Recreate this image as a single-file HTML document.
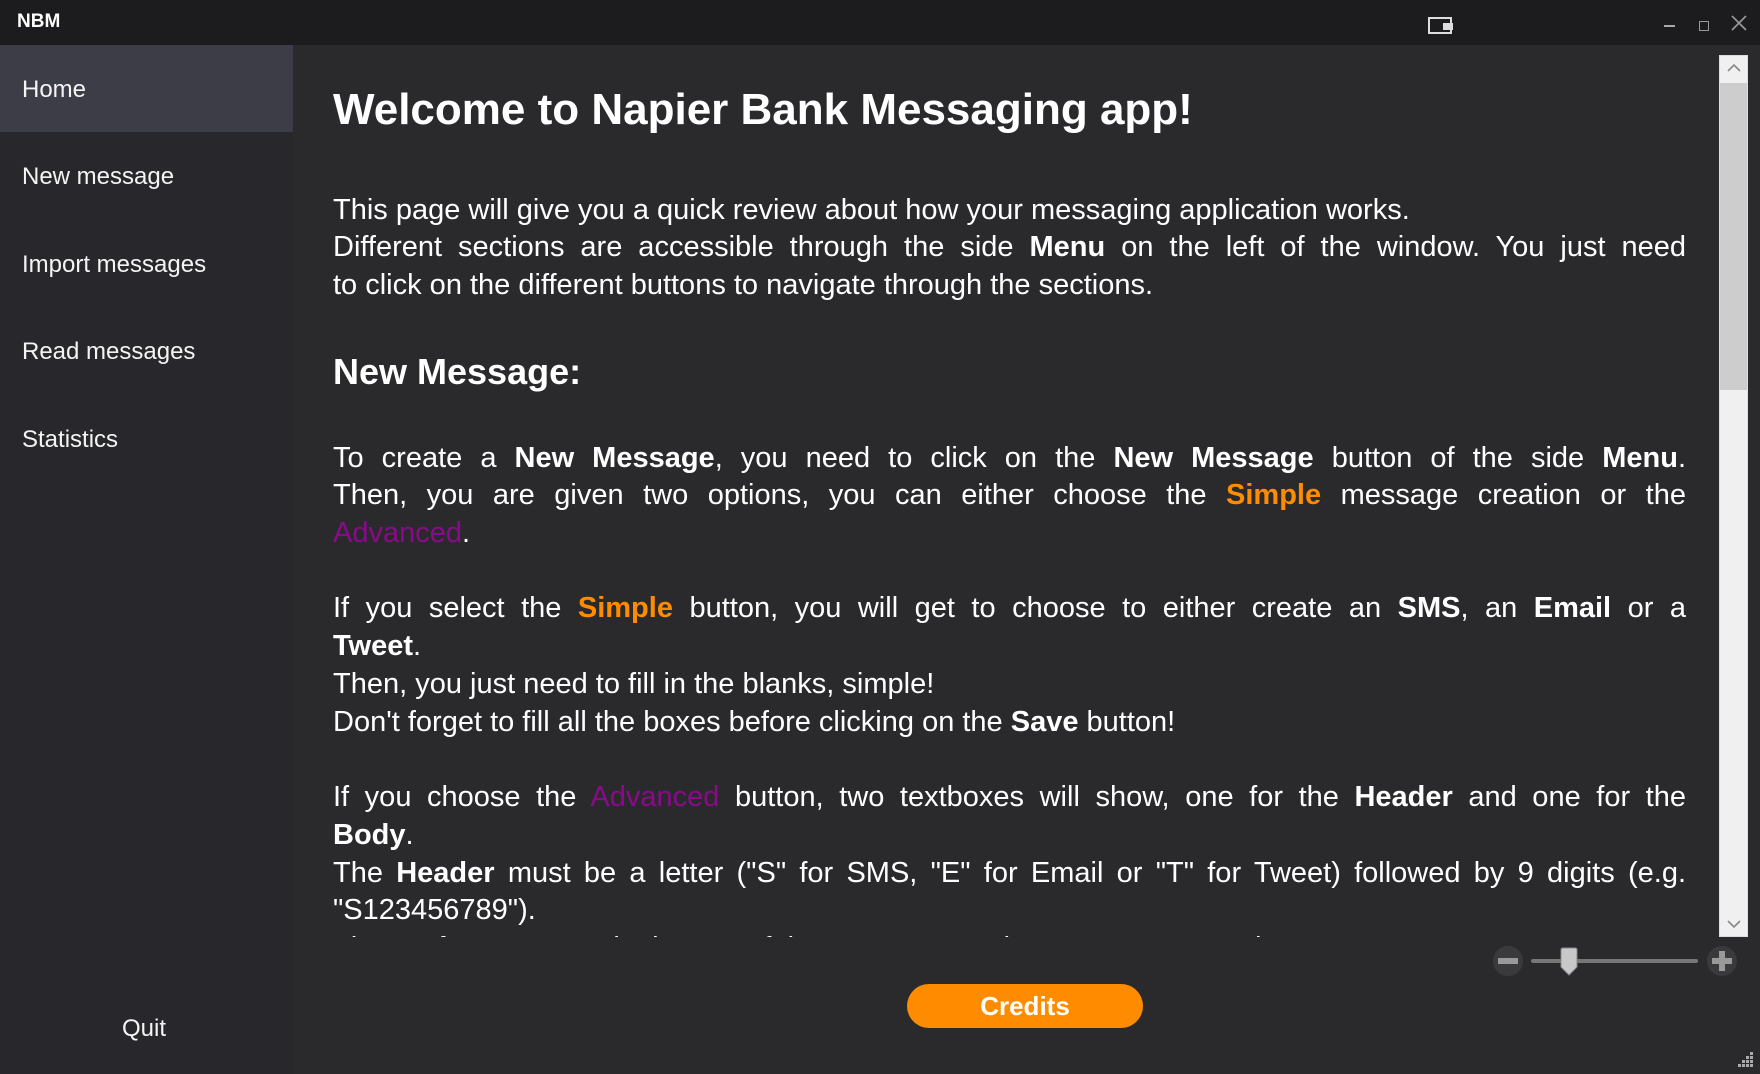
<!DOCTYPE html>
<html><head><meta charset="utf-8"><style>
*{margin:0;padding:0;box-sizing:border-box}
body{width:1760px;height:1074px;background:#2a2a2d;font-family:"Liberation Sans",sans-serif;color:#fff;position:relative;overflow:hidden}
.tb{position:absolute;left:0;top:0;width:1760px;height:45px;background:#1c1c1e}
.side{position:absolute;left:0;top:45px;width:293px;height:1029px;background:#28282c}
.nav{position:absolute;left:22px;font-size:24px;line-height:30px;color:#f4f4f4}
.c{position:absolute;left:333px;width:1353px;white-space:nowrap;font-size:29px;line-height:38px;color:#fff}
.j{text-align:justify;text-align-last:justify}
b{font-weight:bold}
.o{color:#ff8c00}
.p{color:#8b0a8b}
</style></head><body>
<div class="tb">
<div style="position:absolute;left:17px;top:11px;font-size:19px;font-weight:bold">NBM</div>
<div style="position:absolute;left:1428px;top:17px;width:24px;height:17px;border:2px solid #ddd"></div>
<div style="position:absolute;left:1443px;top:23px;width:10px;height:7px;background:#ddd"></div>
<div style="position:absolute;left:1664px;top:25px;width:11px;height:2px;background:#aaa"></div>
<div style="position:absolute;left:1699px;top:21px;width:10px;height:10px;border:1.5px solid #999"></div>
<svg style="position:absolute;left:1731px;top:15px" width="16" height="16"><path d="M1 1L15 15M15 1L1 15" stroke="#999" stroke-width="1.6"/></svg>
</div>
<div class="side">
<div style="position:absolute;left:0;top:0;width:293px;height:87px;background:#3d3d47"></div>
</div>
<div class="nav" style="top:75px">Home</div>
<div class="nav" style="top:162px">New message</div>
<div class="nav" style="top:250px">Import messages</div>
<div class="nav" style="top:337px">Read messages</div>
<div class="nav" style="top:425px">Statistics</div>
<div class="nav" style="top:1014px;left:122px">Quit</div>

<div style="position:absolute;left:293px;top:45px;width:1425px;height:892px;overflow:hidden">
<div style="position:relative;left:-293px;top:-45px">
<div class="c" style="top:82px;font-size:44px;line-height:56px;font-weight:bold">Welcome to Napier Bank Messaging app!</div>
<div class="c" style="top:191px">This page will give you a quick review about how your messaging application works.</div>
<div class="c j" style="top:228px">Different sections are accessible through the side <b>Menu</b> on the left of the window. You just need</div>
<div class="c" style="top:266px">to click on the different buttons to navigate through the sections.</div>
<div class="c" style="top:350px;font-size:36px;line-height:44px;font-weight:bold">New Message:</div>
<div class="c j" style="top:439px">To create a <b>New Message</b>, you need to click on the <b>New Message</b> button of the side <b>Menu</b>.</div>
<div class="c j" style="top:476px">Then, you are given two options, you can either choose the <b class="o">Simple</b> message creation or the</div>
<div class="c" style="top:514px"><span class="p">Advanced</span>.</div>
<div class="c j" style="top:589px">If you select the <b class="o">Simple</b> button, you will get to choose to either create an <b>SMS</b>, an <b>Email</b> or a</div>
<div class="c" style="top:627px"><b>Tweet</b>.</div>
<div class="c" style="top:665px">Then, you just need to fill in the blanks, simple!</div>
<div class="c" style="top:703px">Don't forget to fill all the boxes before clicking on the <b>Save</b> button!</div>
<div class="c j" style="top:778px">If you choose the <span class="p">Advanced</span> button, two textboxes will show, one for the <b>Header</b> and one for the</div>
<div class="c" style="top:816px"><b>Body</b>.</div>
<div class="c j" style="top:854px">The <b>Header</b> must be a letter ("S" for SMS, "E" for Email or "T" for Tweet) followed by 9 digits (e.g.</div>
<div class="c" style="top:891px">"S123456789").</div>
<div class="c" style="top:929px">The <b>Body</b> must contain the text of the message, and you must respect the</div>
</div></div>

<div style="position:absolute;left:1719px;top:55px;width:29px;height:882px;background:#f0f0f0;border:1px solid #ddd"></div>
<div style="position:absolute;left:1720px;top:83px;width:27px;height:307px;background:#cdcdcd"></div>
<svg style="position:absolute;left:1726px;top:62px" width="16" height="12"><path d="M2 9L8 3L14 9" stroke="#888" stroke-width="1.6" fill="none"/></svg>
<svg style="position:absolute;left:1726px;top:918px" width="16" height="12"><path d="M2 3L8 9L14 3" stroke="#888" stroke-width="1.6" fill="none"/></svg>

<div style="position:absolute;left:1493px;top:946px;width:30px;height:30px;border-radius:50%;background:#3a3a3c"></div>
<div style="position:absolute;left:1498px;top:958px;width:20px;height:6px;background:#999"></div>
<div style="position:absolute;left:1707px;top:946px;width:30px;height:30px;border-radius:50%;background:#3a3a3c"></div>
<div style="position:absolute;left:1712px;top:958px;width:20px;height:6px;background:#999"></div>
<div style="position:absolute;left:1719px;top:951px;width:6px;height:20px;background:#999"></div>
<div style="position:absolute;left:1531px;top:959px;width:167px;height:4px;background:#777;border-radius:2px"></div>
<svg style="position:absolute;left:1559px;top:947px" width="20" height="30"><path d="M2 3Q2 1 4 1H16Q18 1 18 3V20L10 28L2 20Z" fill="#c8c8c8" stroke="#888"/></svg>

<div style="position:absolute;left:907px;top:984px;width:236px;height:44px;border-radius:22px;background:#ff8c00;text-align:center;font-size:26px;line-height:44px;font-weight:bold">Credits</div>
<svg style="position:absolute;left:1734px;top:1050px" width="20" height="20"><g fill="#aaa"><rect x="16" y="2" width="3" height="3"/><rect x="12" y="6" width="3" height="3"/><rect x="16" y="6" width="3" height="3"/><rect x="8" y="10" width="3" height="3"/><rect x="12" y="10" width="3" height="3"/><rect x="16" y="10" width="3" height="3"/><rect x="4" y="14" width="3" height="3"/><rect x="8" y="14" width="3" height="3"/><rect x="12" y="14" width="3" height="3"/><rect x="16" y="14" width="3" height="3"/></g></svg>
</body></html>
